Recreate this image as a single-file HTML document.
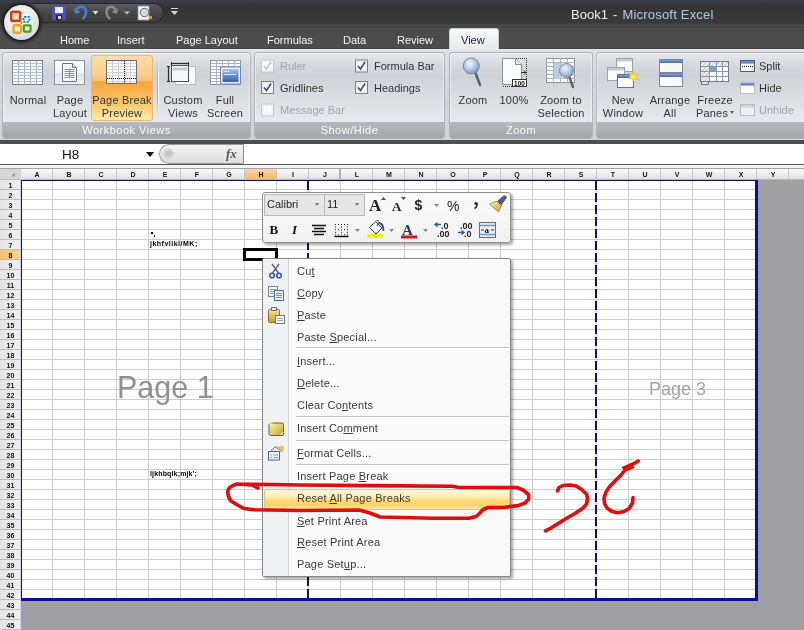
<!DOCTYPE html><html><head><meta charset="utf-8"><title>Book1 - Microsoft Excel</title><style>
*{box-sizing:border-box}
html,body{margin:0;padding:0}
body{width:804px;height:630px;overflow:hidden;position:relative;background:#fff;font-family:"Liberation Sans",sans-serif;}
.abs{position:absolute}
.t{position:absolute;white-space:nowrap;line-height:1;will-change:transform}
</style></head><body>
<div class="abs" style="left:0;top:0;width:804px;height:50px;background:linear-gradient(#3b3e52 0px,#363841 4px,#333333 6px,#3a3a3a 23px,#4a4a4a 25px,#444444 27px,#4b4b4b 29px,#4d4d4d 48px,#383838 49px,#383838 50px)"></div>
<div class="t" style="left:571px;top:8px;font-size:13px;word-spacing:1.5px;color:#ececec">Book1 - <span style="color:#b5c7e0;letter-spacing:0.2px;word-spacing:0">Microsoft Excel</span></div>
<div class="abs" style="left:30px;top:3px;width:134px;height:20px;border-radius:0 10px 10px 0;background:linear-gradient(#5a5a5a,#464646 50%,#3c3c3c);border:1px solid #2a2a2a;border-left:none"></div>
<div class="abs" style="left:-1px;top:0px;width:45px;height:45px;border-radius:50%;background:radial-gradient(circle closest-side,#272727 78%,rgba(45,45,45,0) 100%)"></div>
<div class="abs" style="left:4px;top:4.5px;width:35px;height:35px;border-radius:50%;background:radial-gradient(circle at 45% 40%,#ffffff 0%,#eef0ee 40%,#d5d8d6 75%,#b0b3b1 100%);box-shadow:0 0 1px 1px rgba(0,0,0,.5)"></div>
<svg class="abs" style="left:0;top:0" width="45" height="45">
<rect x="11.2" y="11.9" width="9" height="9" rx="1.5" fill="#f3e0c8" stroke="#d2401a" stroke-width="2.6"/>
<rect x="13.5" y="25.2" width="7.5" height="7.5" rx="1.2" fill="#f6eecc" stroke="#eca51e" stroke-width="2.4"/>
<rect x="23.5" y="16.8" width="6" height="5" rx="1" fill="#e4ecf6" stroke="#2f74c0" stroke-width="1.8" stroke-dasharray="2,1.2"/>
<rect x="23.8" y="25.3" width="6.8" height="6.4" rx="1" fill="#dcefd2" stroke="#4c9a2a" stroke-width="2.2"/>
<circle cx="21.5" cy="23" r="1" fill="#b06a20"/>
</svg>
<svg class="abs" style="left:0;top:0" width="200" height="26">
<rect x="52" y="6" width="14" height="14" rx="1" fill="#4d4fb8"/>
<rect x="55" y="7" width="8" height="6" fill="#e8ecf4"/>
<rect x="56" y="15" width="6" height="5" fill="#23235a"/><rect x="58" y="16" width="3" height="3" fill="#d8dcf0"/>
<path d="M76 11 C78 5, 87 5, 86 13 C85.5 16, 84 18, 82.5 19" fill="none" stroke="#4a7ed6" stroke-width="2.6"/>
<path d="M74 8 L75 14 L80.5 12 Z" fill="#4a7ed6"/>
<path d="M92.5 11 L98.5 11 L95.5 14.5 Z" fill="#e6e6e6"/>
<path d="M116 11 C114 5, 106 5, 106.5 13 C107 16, 108.5 18, 110 19" fill="none" stroke="#8a8a8a" stroke-width="2.6"/>
<path d="M118 8 L117 14 L111.5 12 Z" fill="#8a8a8a"/>
<path d="M124 11.5 L130 11.5 L127 14.5 Z" fill="#bdbdbd"/>
<rect x="138" y="6" width="11" height="14" fill="#f4f4f4" stroke="#9a9a9a" stroke-width=".8"/>
<circle cx="144.5" cy="12.5" r="4.2" fill="#cdd9e6" stroke="#6a6a6a" stroke-width="1"/>
<rect x="149" y="16" width="3" height="3" fill="#e8962e"/>
<path d="M171 8.5 H178" stroke="#d8d8d8" stroke-width="1"/>
<path d="M171 11 L178 11 L174.5 15 Z" fill="#d8d8d8"/>
</svg>
<div class="t" style="left:60px;top:35px;font-size:11px;color:#f4f4f4">Home</div>
<div class="t" style="left:117px;top:35px;font-size:11px;color:#f4f4f4">Insert</div>
<div class="t" style="left:176px;top:35px;font-size:11px;color:#f4f4f4">Page Layout</div>
<div class="t" style="left:266.5px;top:35px;font-size:11px;color:#f4f4f4">Formulas</div>
<div class="t" style="left:343px;top:35px;font-size:11px;color:#f4f4f4">Data</div>
<div class="t" style="left:396.5px;top:35px;font-size:11px;color:#f4f4f4">Review</div>
<div class="abs" style="left:449px;top:28px;width:50px;height:24px;border-radius:3px 3px 0 0;background:linear-gradient(#f7f8f9,#e6e8eb);border:1px solid #c9cbce;border-bottom:none"></div>
<div class="t" style="left:461px;top:35px;font-size:11px;color:#1e1e2e">View</div>
<div class="abs" style="left:0;top:49px;width:804px;height:92px;background:linear-gradient(#dfe1e4,#d3d6da 40%,#cfd2d6);border-top:1px solid #e8eaec"></div>
<div class="abs" style="left:2px;top:52px;width:249px;height:87px;border:1px solid #b0b3b8;border-radius:3px;background:linear-gradient(#e6e8eb 0px,#d3d6db 14px,#ced2d7 24px,#d8dbdf 40px,#e3e5e8 60px,#e8eaec 70px);box-shadow:inset 0 0 0 1px rgba(255,255,255,.45)"></div>
<div class="abs" style="left:3px;top:122px;width:247px;height:16px;background:linear-gradient(#b6b9bd,#a2a6ab);border-radius:0 0 2px 2px"></div>
<div class="t" style="left:2px;width:249px;text-align:center;top:125px;font-size:11px;letter-spacing:0.5px;color:#fbfbfb">Workbook Views</div>
<div class="abs" style="left:254px;top:52px;width:191px;height:87px;border:1px solid #b0b3b8;border-radius:3px;background:linear-gradient(#e6e8eb 0px,#d3d6db 14px,#ced2d7 24px,#d8dbdf 40px,#e3e5e8 60px,#e8eaec 70px);box-shadow:inset 0 0 0 1px rgba(255,255,255,.45)"></div>
<div class="abs" style="left:255px;top:122px;width:189px;height:16px;background:linear-gradient(#b6b9bd,#a2a6ab);border-radius:0 0 2px 2px"></div>
<div class="t" style="left:254px;width:191px;text-align:center;top:125px;font-size:11px;letter-spacing:0.5px;color:#fbfbfb">Show/Hide</div>
<div class="abs" style="left:449px;top:52px;width:144px;height:87px;border:1px solid #b0b3b8;border-radius:3px;background:linear-gradient(#e6e8eb 0px,#d3d6db 14px,#ced2d7 24px,#d8dbdf 40px,#e3e5e8 60px,#e8eaec 70px);box-shadow:inset 0 0 0 1px rgba(255,255,255,.45)"></div>
<div class="abs" style="left:450px;top:122px;width:142px;height:16px;background:linear-gradient(#b6b9bd,#a2a6ab);border-radius:0 0 2px 2px"></div>
<div class="t" style="left:449px;width:144px;text-align:center;top:125px;font-size:11px;letter-spacing:0.5px;color:#fbfbfb">Zoom</div>
<div class="abs" style="left:596px;top:52px;width:220px;height:87px;border:1px solid #b0b3b8;border-radius:3px;background:linear-gradient(#e6e8eb 0px,#d3d6db 14px,#ced2d7 24px,#d8dbdf 40px,#e3e5e8 60px,#e8eaec 70px);box-shadow:inset 0 0 0 1px rgba(255,255,255,.45)"></div>
<div class="abs" style="left:597px;top:122px;width:218px;height:16px;background:linear-gradient(#b6b9bd,#a2a6ab);border-radius:0 0 2px 2px"></div>
<div class="abs" style="left:91px;top:55px;width:62px;height:66px;border:1px solid #e8b878;border-radius:3px;background:linear-gradient(#fcdcaa 0%,#fbcf90 25%,#fac27a 38%,#f8a63e 40%,#f9b24e 55%,#fbca6c 75%,#fde199 92%,#fde9aa 100%)"></div>
<div class="abs" style="left:157px;top:59px;width:1px;height:57px;background:linear-gradient(rgba(160,165,170,0),#a8acb0 30%,#a8acb0 70%,rgba(160,165,170,0))"></div>
<div class="abs" style="left:158px;top:59px;width:1px;height:57px;background:linear-gradient(rgba(255,255,255,0),#fafafa 30%,#fafafa 70%,rgba(255,255,255,0))"></div>
<svg class="abs" style="left:0;top:0" width="804" height="140">
<defs><linearGradient id="blu" x1="0" y1="0" x2="0" y2="1"><stop offset="0" stop-color="#a9c4ea"/><stop offset="1" stop-color="#2f5db0"/></linearGradient><linearGradient id="bar" x1="0" y1="0" x2="0" y2="1"><stop offset="0" stop-color="#7fa2d8"/><stop offset="1" stop-color="#3d68b5"/></linearGradient><radialGradient id="lens" cx="0.4" cy="0.35" r="0.7"><stop offset="0" stop-color="#f2f7ff"/><stop offset="0.6" stop-color="#a9c2e2"/><stop offset="1" stop-color="#6f8fb8"/></radialGradient><linearGradient id="pl" x1="0" y1="0" x2="0" y2="1"><stop offset="0" stop-color="#ffffff"/><stop offset="0.5" stop-color="#f3f5f8"/><stop offset="0.5" stop-color="#dde3ea"/><stop offset="1" stop-color="#eef1f5"/></linearGradient></defs>
<rect x="12.5" y="60.5" width="30" height="24" fill="#ffffff" stroke="#6f7f9a" stroke-width="1"/>
<line x1="18.5" y1="60.5" x2="18.5" y2="84.5" stroke="#a3b1c8" stroke-width="1"/>
<line x1="24.5" y1="60.5" x2="24.5" y2="84.5" stroke="#a3b1c8" stroke-width="1"/>
<line x1="30.5" y1="60.5" x2="30.5" y2="84.5" stroke="#a3b1c8" stroke-width="1"/>
<line x1="36.5" y1="60.5" x2="36.5" y2="84.5" stroke="#a3b1c8" stroke-width="1"/>
<line x1="12.5" y1="63.5" x2="42.5" y2="63.5" stroke="#b3bfd2" stroke-width="1"/>
<line x1="12.5" y1="66.5" x2="42.5" y2="66.5" stroke="#b3bfd2" stroke-width="1"/>
<line x1="12.5" y1="69.5" x2="42.5" y2="69.5" stroke="#b3bfd2" stroke-width="1"/>
<line x1="12.5" y1="72.5" x2="42.5" y2="72.5" stroke="#b3bfd2" stroke-width="1"/>
<line x1="12.5" y1="75.5" x2="42.5" y2="75.5" stroke="#b3bfd2" stroke-width="1"/>
<line x1="12.5" y1="78.5" x2="42.5" y2="78.5" stroke="#b3bfd2" stroke-width="1"/>
<line x1="12.5" y1="81.5" x2="42.5" y2="81.5" stroke="#b3bfd2" stroke-width="1"/>
<rect x="54.5" y="60.5" width="30" height="24" fill="url(#pl)" stroke="#8795ab"/>
<path d="M62.5 63.5 H72.5 L76.5 67.5 V81.5 H62.5 Z" fill="#fafbfc" stroke="#6d7480"/>
<path d="M72.5 63.5 V67.5 H76.5" fill="#e8ebef" stroke="#6d7480"/>
<line x1="64.5" y1="69.5" x2="74.5" y2="69.5" stroke="#8a93a3" stroke-width="1"/>
<line x1="64.5" y1="71.5" x2="74.5" y2="71.5" stroke="#8a93a3" stroke-width="1"/>
<line x1="64.5" y1="73.5" x2="74.5" y2="73.5" stroke="#8a93a3" stroke-width="1"/>
<line x1="64.5" y1="75.5" x2="74.5" y2="75.5" stroke="#8a93a3" stroke-width="1"/>
<line x1="64.5" y1="77.5" x2="74.5" y2="77.5" stroke="#8a93a3" stroke-width="1"/>
<line x1="69.5" y1="69" x2="69.5" y2="78" stroke="#8a93a3"/>
<rect x="106.5" y="60.5" width="30" height="23" fill="#ffffff" stroke="#6c6c6c"/>
<line x1="112.5" y1="61" x2="112.5" y2="83" stroke="#c9cdd4"/>
<line x1="118.5" y1="61" x2="118.5" y2="83" stroke="#c9cdd4"/>
<line x1="124.5" y1="61" x2="124.5" y2="83" stroke="#c9cdd4"/>
<line x1="130.5" y1="61" x2="130.5" y2="83" stroke="#c9cdd4"/>
<line x1="107" y1="63.5" x2="136" y2="63.5" stroke="#d2d6dc"/>
<line x1="107" y1="66.5" x2="136" y2="66.5" stroke="#d2d6dc"/>
<line x1="107" y1="69.5" x2="136" y2="69.5" stroke="#d2d6dc"/>
<line x1="107" y1="72.5" x2="136" y2="72.5" stroke="#d2d6dc"/>
<line x1="107" y1="75.5" x2="136" y2="75.5" stroke="#d2d6dc"/>
<line x1="107" y1="78.5" x2="136" y2="78.5" stroke="#d2d6dc"/>
<line x1="107" y1="81.5" x2="136" y2="81.5" stroke="#d2d6dc"/>
<line x1="124.7" y1="61" x2="124.7" y2="83.5" stroke="#111" stroke-width="1" stroke-dasharray="1,1"/>
<line x1="107" y1="78.5" x2="136" y2="78.5" stroke="#111" stroke-width="1" stroke-dasharray="1,1"/>
<rect x="175.5" y="66.5" width="20" height="18" fill="#fbfcfd" stroke="#b9bec6"/>
<rect x="171.5" y="65.5" width="17" height="16" fill="#f4f6f9" stroke="#4a4f58"/>
<rect x="173" y="67.5" width="14" height="3" fill="#c3c9d3"/>
<line x1="168.5" y1="66" x2="168.5" y2="81.5" stroke="#2a2a2a" stroke-width="1.2"/>
<line x1="167" y1="66.5" x2="170" y2="66.5" stroke="#2a2a2a"/><line x1="167" y1="81.5" x2="170" y2="81.5" stroke="#2a2a2a"/>
<line x1="171" y1="63.5" x2="189" y2="63.5" stroke="#2a2a2a" stroke-width="1.2"/>
<line x1="171.5" y1="62" x2="171.5" y2="65" stroke="#2a2a2a"/><line x1="188.5" y1="62" x2="188.5" y2="65" stroke="#2a2a2a"/>
<rect x="210.5" y="60.5" width="30" height="24" fill="#ffffff" stroke="#8a94a4"/>
<line x1="216.5" y1="60.5" x2="216.5" y2="84.5" stroke="#aab3c0"/>
<line x1="222.5" y1="60.5" x2="222.5" y2="84.5" stroke="#aab3c0"/>
<line x1="228.5" y1="60.5" x2="228.5" y2="84.5" stroke="#aab3c0"/>
<line x1="234.5" y1="60.5" x2="234.5" y2="84.5" stroke="#aab3c0"/>
<line x1="210.5" y1="63.5" x2="240.5" y2="63.5" stroke="#aab3c0"/>
<line x1="210.5" y1="66.5" x2="240.5" y2="66.5" stroke="#aab3c0"/>
<line x1="210.5" y1="69.5" x2="240.5" y2="69.5" stroke="#aab3c0"/>
<line x1="210.5" y1="72.5" x2="240.5" y2="72.5" stroke="#aab3c0"/>
<line x1="210.5" y1="75.5" x2="240.5" y2="75.5" stroke="#aab3c0"/>
<line x1="210.5" y1="78.5" x2="240.5" y2="78.5" stroke="#aab3c0"/>
<line x1="210.5" y1="81.5" x2="240.5" y2="81.5" stroke="#aab3c0"/>
<rect x="220.5" y="67" width="20" height="17" fill="#eef3fa" stroke="#6f87aa"/>
<rect x="222.5" y="69" width="16" height="13" fill="url(#blu)"/>
<line x1="224" y1="71.5" x2="230" y2="71.5" stroke="#d6e2f3"/><line x1="224" y1="74.5" x2="236" y2="74.5" stroke="#d6e2f3"/>
<rect x="261.5" y="60.0" width="12" height="12" fill="#f7f8f9" stroke="#c4c7cb"/>
<rect x="263" y="61.5" width="9" height="9" fill="none" stroke="#eceef0"/>
<path d="M264 66.0 L266.5 69.0 L271 62.0" fill="none" stroke="#c0c4ca" stroke-width="1.5"/>
<rect x="261.5" y="81.5" width="12" height="12" fill="#f7f8f9" stroke="#7d8289"/>
<rect x="263" y="83" width="9" height="9" fill="none" stroke="#dfe3e8"/>
<path d="M264 87.5 L266.5 90.5 L271 83.5" fill="none" stroke="#34475f" stroke-width="1.5"/>
<rect x="261.5" y="104.0" width="12" height="12" fill="#f7f8f9" stroke="#c4c7cb"/>
<rect x="263" y="105.5" width="9" height="9" fill="none" stroke="#eceef0"/>
<rect x="355.5" y="60.0" width="12" height="12" fill="#f7f8f9" stroke="#7d8289"/>
<rect x="357" y="61.5" width="9" height="9" fill="none" stroke="#dfe3e8"/>
<path d="M358 66.0 L360.5 69.0 L365 62.0" fill="none" stroke="#34475f" stroke-width="1.5"/>
<rect x="355.5" y="81.5" width="12" height="12" fill="#f7f8f9" stroke="#7d8289"/>
<rect x="357" y="83" width="9" height="9" fill="none" stroke="#dfe3e8"/>
<path d="M358 87.5 L360.5 90.5 L365 83.5" fill="none" stroke="#34475f" stroke-width="1.5"/>
<line x1="475.5" y1="73" x2="480" y2="85" stroke="#575b62" stroke-width="2.4" stroke-linecap="round"/>
<circle cx="471.3" cy="66" r="8" fill="url(#lens)" stroke="#7b8896" stroke-width="1"/>
<rect x="516" y="58" width="1" height="1" fill="#333"/><rect x="518" y="58" width="1" height="1" fill="#333"/><rect x="520" y="58" width="1" height="1" fill="#333"/><rect x="522" y="58" width="1" height="1" fill="#333"/><rect x="524" y="58" width="1" height="1" fill="#333"/><rect x="526" y="58" width="1" height="1" fill="#333"/><rect x="526" y="58" width="1" height="1" fill="#333"/><rect x="526" y="60" width="1" height="1" fill="#333"/><rect x="526" y="62" width="1" height="1" fill="#333"/><rect x="526" y="64" width="1" height="1" fill="#333"/><rect x="526" y="66" width="1" height="1" fill="#333"/><rect x="526" y="68" width="1" height="1" fill="#333"/><rect x="526" y="70" width="1" height="1" fill="#333"/><rect x="526" y="72" width="1" height="1" fill="#333"/><rect x="526" y="74" width="1" height="1" fill="#333"/><rect x="526" y="76" width="1" height="1" fill="#333"/><rect x="526" y="78" width="1" height="1" fill="#333"/><rect x="526" y="80" width="1" height="1" fill="#333"/><rect x="526" y="82" width="1" height="1" fill="#333"/><rect x="526" y="84" width="1" height="1" fill="#333"/><rect x="503" y="86" width="1" height="1" fill="#333"/><rect x="505" y="86" width="1" height="1" fill="#333"/><rect x="507" y="86" width="1" height="1" fill="#333"/><rect x="509" y="86" width="1" height="1" fill="#333"/><rect x="511" y="86" width="1" height="1" fill="#333"/><rect x="513" y="86" width="1" height="1" fill="#333"/><rect x="515" y="86" width="1" height="1" fill="#333"/><rect x="517" y="86" width="1" height="1" fill="#333"/><rect x="519" y="86" width="1" height="1" fill="#333"/><rect x="521" y="86" width="1" height="1" fill="#333"/><rect x="523" y="86" width="1" height="1" fill="#333"/><rect x="525" y="86" width="1" height="1" fill="#333"/>
<path d="M502.5 58.5 H515.5 L521.5 64.5 V84.5 H502.5 Z" fill="#fbfcfd" stroke="#8a9099"/>
<path d="M515.5 58.5 V64.5 H521.5" fill="#e5e8ec" stroke="#8a9099"/>
<path d="M521 72.5 H526 M524 70.5 L526 72.5 L524 74.5" fill="none" stroke="#333"/>
<rect x="512.5" y="79.5" width="14" height="7" fill="#fff" stroke="#333"/>
<text x="519.5" y="85.6" font-family="Liberation Sans" font-size="6.5" font-weight="bold" text-anchor="middle" fill="#111">100</text>
<rect x="546.5" y="58.5" width="28" height="24" fill="#fff" stroke="#8d97a6"/>
<line x1="553.5" y1="58.5" x2="553.5" y2="82.5" stroke="#a9b3c2"/>
<line x1="560.5" y1="58.5" x2="560.5" y2="82.5" stroke="#a9b3c2"/>
<line x1="567.5" y1="58.5" x2="567.5" y2="82.5" stroke="#a9b3c2"/>
<line x1="546.5" y1="62.5" x2="574.5" y2="62.5" stroke="#a9b3c2"/>
<line x1="546.5" y1="66.5" x2="574.5" y2="66.5" stroke="#a9b3c2"/>
<line x1="546.5" y1="70.5" x2="574.5" y2="70.5" stroke="#a9b3c2"/>
<line x1="546.5" y1="74.5" x2="574.5" y2="74.5" stroke="#a9b3c2"/>
<line x1="546.5" y1="78.5" x2="574.5" y2="78.5" stroke="#a9b3c2"/>
<rect x="554" y="63" width="8" height="16" fill="#b9cbe6"/>
<line x1="569" y1="76" x2="573" y2="87" stroke="#5b5f66" stroke-width="2.4" stroke-linecap="round"/>
<circle cx="566.5" cy="70.5" r="7" fill="url(#lens)" stroke="#7b8896"/>
<rect x="616.5" y="58.5" width="16" height="13" fill="#fdfdfd" stroke="#9ba3ad"/><rect x="617" y="59" width="15" height="2.5" fill="#c8ccd2"/>
<rect x="607.5" y="67.5" width="17" height="13" fill="#fdfdfd" stroke="#9ba3ad"/><rect x="608" y="68" width="16" height="2.5" fill="#c8ccd2"/>
<rect x="617.5" y="74.5" width="16" height="13" fill="#fdfdfd" stroke="#6a7484"/><rect x="618" y="75" width="15" height="3" fill="url(#bar)"/>
<path d="M633 71 L634.5 75 L638.5 73.5 L636 76.5 L638.5 80 L634.5 78.5 L633 81.5 L632 78 L628.5 79 L630.5 76 L628.5 73 L632 74.5 Z" fill="#ffe566" stroke="#e6b800" stroke-width=".6"/>
<rect x="659.5" y="59.5" width="23" height="13" fill="#f8f9fb" stroke="#7d8796"/><rect x="660" y="60" width="22" height="3" fill="url(#bar)"/>
<rect x="659.5" y="73.5" width="23" height="13" fill="#f8f9fb" stroke="#7d8796"/><rect x="660" y="74" width="22" height="3" fill="url(#bar)"/>
<defs><pattern id="hatch" width="3" height="3" patternUnits="userSpaceOnUse" patternTransform="rotate(45)"><rect width="3" height="3" fill="#eef1f6"/><line x1="0" y1="0" x2="0" y2="3" stroke="#8a9ab8" stroke-width="1"/></pattern></defs>
<rect x="700.5" y="61.5" width="28" height="20" fill="#fff" stroke="#6f7b8c"/>
<rect x="701" y="62" width="8" height="19" fill="url(#hatch)"/><rect x="709" y="62" width="19" height="4.5" fill="url(#hatch)"/>
<line x1="709.5" y1="61.5" x2="709.5" y2="81.5" stroke="#8d97a6"/>
<line x1="716.5" y1="61.5" x2="716.5" y2="81.5" stroke="#8d97a6"/>
<line x1="722.5" y1="61.5" x2="722.5" y2="81.5" stroke="#8d97a6"/>
<line x1="700.5" y1="66.5" x2="728.5" y2="66.5" stroke="#8d97a6"/>
<line x1="700.5" y1="71.5" x2="728.5" y2="71.5" stroke="#8d97a6"/>
<line x1="700.5" y1="76.5" x2="728.5" y2="76.5" stroke="#8d97a6"/>
<rect x="710" y="67" width="6" height="4" fill="#7a9fd6"/>
<rect x="701.5" y="81.5" width="7" height="3" fill="url(#hatch)" stroke="#6f7b8c"/>
<rect x="740.5" y="60.5" width="14" height="11" fill="#fff" stroke="#55606e"/><rect x="741" y="61" width="13" height="2.5" fill="url(#bar)"/><line x1="742" y1="66.5" x2="753" y2="66.5" stroke="#333" stroke-dasharray="1,1"/>
<rect x="740.5" y="82.5" width="14" height="11" fill="#fff" stroke="#8a93a0" stroke-dasharray="1,1"/><rect x="741" y="83" width="13" height="2.5" fill="url(#bar)"/>
<rect x="740.5" y="104.5" width="14" height="11" fill="#eef0f2" stroke="#b7bcc3"/><rect x="741" y="105" width="13" height="2.5" fill="#cdd1d6"/>
</svg>
<div class="t" style="left:-12.5px;width:80px;text-align:center;top:94.5px;font-size:11px;letter-spacing:0.2px;color:#333333">Normal</div>
<div class="t" style="left:29.5px;width:80px;text-align:center;top:94.5px;font-size:11px;letter-spacing:0.2px;color:#333333">Page</div>
<div class="t" style="left:29.5px;width:80px;text-align:center;top:107.5px;font-size:11px;letter-spacing:0.2px;color:#333333">Layout</div>
<div class="t" style="left:81.5px;width:80px;text-align:center;top:94.5px;font-size:11px;letter-spacing:0.2px;color:#333333">Page Break</div>
<div class="t" style="left:81.5px;width:80px;text-align:center;top:107.5px;font-size:11px;letter-spacing:0.2px;color:#333333">Preview</div>
<div class="t" style="left:142.5px;width:80px;text-align:center;top:94.5px;font-size:11px;letter-spacing:0.2px;color:#333333">Custom</div>
<div class="t" style="left:142.5px;width:80px;text-align:center;top:107.5px;font-size:11px;letter-spacing:0.2px;color:#333333">Views</div>
<div class="t" style="left:185px;width:80px;text-align:center;top:94.5px;font-size:11px;letter-spacing:0.2px;color:#333333">Full</div>
<div class="t" style="left:185px;width:80px;text-align:center;top:107.5px;font-size:11px;letter-spacing:0.2px;color:#333333">Screen</div>
<div class="t" style="left:280px;top:61px;font-size:11px;color:#a2a5a9">Ruler</div>
<div class="t" style="left:280px;top:83px;font-size:11px;color:#333333">Gridlines</div>
<div class="t" style="left:280px;top:105px;font-size:11px;color:#a2a5a9">Message Bar</div>
<div class="t" style="left:374px;top:61px;font-size:11px;color:#333333">Formula Bar</div>
<div class="t" style="left:374px;top:83px;font-size:11px;color:#333333">Headings</div>
<div class="t" style="left:432.5px;width:80px;text-align:center;top:94.5px;font-size:11px;letter-spacing:0.2px;color:#333333">Zoom</div>
<div class="t" style="left:474px;width:80px;text-align:center;top:94.5px;font-size:11px;letter-spacing:0.2px;color:#333333">100%</div>
<div class="t" style="left:521px;width:80px;text-align:center;top:94.5px;font-size:11px;letter-spacing:0.2px;color:#333333">Zoom to</div>
<div class="t" style="left:521px;width:80px;text-align:center;top:107.5px;font-size:11px;letter-spacing:0.2px;color:#333333">Selection</div>
<div class="t" style="left:583px;width:80px;text-align:center;top:94.5px;font-size:11px;letter-spacing:0.2px;color:#333333">New</div>
<div class="t" style="left:583px;width:80px;text-align:center;top:107.5px;font-size:11px;letter-spacing:0.2px;color:#333333">Window</div>
<div class="t" style="left:630px;width:80px;text-align:center;top:94.5px;font-size:11px;letter-spacing:0.2px;color:#333333">Arrange</div>
<div class="t" style="left:630px;width:80px;text-align:center;top:107.5px;font-size:11px;letter-spacing:0.2px;color:#333333">All</div>
<div class="t" style="left:674.5px;width:80px;text-align:center;top:94.5px;font-size:11px;letter-spacing:0.2px;color:#333333">Freeze</div>
<div class="t" style="left:672px;width:80px;text-align:center;top:107.5px;font-size:11px;letter-spacing:0.2px;color:#333333">Panes</div>
<div class="abs" style="left:730px;top:111px;width:0;height:0;border-left:2.5px solid transparent;border-right:2.5px solid transparent;border-top:3px solid #555"></div>
<div class="t" style="left:759px;top:61px;font-size:11px;color:#333333">Split</div>
<div class="t" style="left:759px;top:83px;font-size:11px;color:#333333">Hide</div>
<div class="t" style="left:759px;top:105px;font-size:11px;color:#a2a5a9">Unhide</div>
<div class="abs" style="left:0;top:140px;width:804px;height:4px;background:#4e4e4e"></div>
<div class="abs" style="left:0;top:144px;width:804px;height:20px;background:#fff"></div>
<div class="abs" style="left:0;top:164px;width:804px;height:1px;background:#585858"></div>
<div class="abs" style="left:0;top:165px;width:804px;height:3px;background:#f4f4f4"></div>
<div class="abs" style="left:0;top:168px;width:804px;height:1px;background:#a5a5a5"></div>
<div class="t" style="left:61.5px;top:148px;font-size:13.5px;color:#111">H8</div>
<div class="abs" style="left:145.5px;top:152px;width:0;height:0;border-left:4.5px solid transparent;border-right:4.5px solid transparent;border-top:5px solid #000"></div>
<div class="abs" style="left:159px;top:144px;width:85px;height:20px;border-radius:10px 0 0 10px;background:linear-gradient(#f3f3f3,#dcdcdc);border:1px solid #9c9c9c;border-right:1px solid #8a8a8a"></div>
<div class="abs" style="left:162px;top:148px;width:12px;height:12px;border-radius:50%;background:radial-gradient(circle at 55% 45%,#b8b8b8 0%,#d8d8d8 50%,rgba(230,230,230,0) 75%)"></div>
<div class="t" style="left:226px;top:147px;font-size:13px;font-style:italic;font-family:'Liberation Serif',serif;color:#555;font-weight:bold">fx</div>
<svg class="abs" style="left:0;top:0" width="804" height="630" shape-rendering="crispEdges">
<defs><linearGradient id="hdr" x1="0" y1="0" x2="0" y2="1"><stop offset="0" stop-color="#f9f9f9"/><stop offset="0.5" stop-color="#eeeeee"/><stop offset="1" stop-color="#e0e0e0"/></linearGradient><linearGradient id="rhdr" x1="0" y1="0" x2="1" y2="0"><stop offset="0" stop-color="#e4e4e4"/><stop offset="1" stop-color="#f0f0f0"/></linearGradient><linearGradient id="ohdr" x1="0" y1="0" x2="0" y2="1"><stop offset="0" stop-color="#fbd9a4"/><stop offset="0.5" stop-color="#f9c784"/><stop offset="1" stop-color="#f6b868"/></linearGradient><linearGradient id="orow" x1="0" y1="0" x2="1" y2="0"><stop offset="0" stop-color="#f8c07a"/><stop offset="1" stop-color="#fbd197"/></linearGradient></defs>
<rect x="0" y="169" width="804" height="10" fill="url(#hdr)"/>
<rect x="0" y="169" width="20" height="11" fill="#d6d6d6"/><path d="M15 172.5 L15 176.5 L11 176.5 Z" fill="#9a9a9a" shape-rendering="auto"/>
<rect x="245" y="169" width="31" height="10" fill="url(#ohdr)"/>
<rect x="0" y="179" width="804" height="1" fill="#b8b8b8"/>
<rect x="0" y="180" width="20" height="450" fill="url(#rhdr)"/>
<rect x="0" y="250" width="20" height="9" fill="url(#orow)"/>
<rect x="20" y="169" width="1" height="461" fill="#cfcfe6"/>
<rect x="758" y="180" width="46" height="450" fill="#a09fa4"/>
<rect x="21" y="601" width="783" height="29" fill="#a09fa4"/>
<rect x="52" y="169" width="1" height="10" fill="#c4c4c4"/>
<rect x="84" y="169" width="1" height="10" fill="#c4c4c4"/>
<rect x="116" y="169" width="1" height="10" fill="#c4c4c4"/>
<rect x="148" y="169" width="1" height="10" fill="#c4c4c4"/>
<rect x="180" y="169" width="1" height="10" fill="#c4c4c4"/>
<rect x="212" y="169" width="1" height="10" fill="#c4c4c4"/>
<rect x="244" y="169" width="1" height="10" fill="#c4c4c4"/>
<rect x="276" y="169" width="1" height="10" fill="#c4c4c4"/>
<rect x="308" y="169" width="1" height="10" fill="#c4c4c4"/>
<rect x="340" y="169" width="1" height="10" fill="#c4c4c4"/>
<rect x="372" y="169" width="1" height="10" fill="#c4c4c4"/>
<rect x="404" y="169" width="1" height="10" fill="#c4c4c4"/>
<rect x="436" y="169" width="1" height="10" fill="#c4c4c4"/>
<rect x="468" y="169" width="1" height="10" fill="#c4c4c4"/>
<rect x="500" y="169" width="1" height="10" fill="#c4c4c4"/>
<rect x="532" y="169" width="1" height="10" fill="#c4c4c4"/>
<rect x="564" y="169" width="1" height="10" fill="#c4c4c4"/>
<rect x="596" y="169" width="1" height="10" fill="#c4c4c4"/>
<rect x="628" y="169" width="1" height="10" fill="#c4c4c4"/>
<rect x="660" y="169" width="1" height="10" fill="#c4c4c4"/>
<rect x="692" y="169" width="1" height="10" fill="#c4c4c4"/>
<rect x="724" y="169" width="1" height="10" fill="#c4c4c4"/>
<rect x="756" y="169" width="1" height="10" fill="#c4c4c4"/>
<rect x="788" y="169" width="1" height="10" fill="#c4c4c4"/>
<rect x="820" y="169" width="1" height="10" fill="#c4c4c4"/>
<rect x="339" y="169" width="2" height="10" fill="#b0b0b0"/>
<rect x="0" y="189" width="20" height="1" fill="#bdbdbd"/>
<rect x="0" y="199" width="20" height="1" fill="#bdbdbd"/>
<rect x="0" y="209" width="20" height="1" fill="#bdbdbd"/>
<rect x="0" y="219" width="20" height="1" fill="#bdbdbd"/>
<rect x="0" y="229" width="20" height="1" fill="#bdbdbd"/>
<rect x="0" y="239" width="20" height="1" fill="#bdbdbd"/>
<rect x="0" y="249" width="20" height="1" fill="#bdbdbd"/>
<rect x="0" y="259" width="20" height="1" fill="#bdbdbd"/>
<rect x="0" y="269" width="20" height="1" fill="#bdbdbd"/>
<rect x="0" y="279" width="20" height="1" fill="#bdbdbd"/>
<rect x="0" y="289" width="20" height="1" fill="#bdbdbd"/>
<rect x="0" y="299" width="20" height="1" fill="#bdbdbd"/>
<rect x="0" y="309" width="20" height="1" fill="#bdbdbd"/>
<rect x="0" y="319" width="20" height="1" fill="#bdbdbd"/>
<rect x="0" y="329" width="20" height="1" fill="#bdbdbd"/>
<rect x="0" y="339" width="20" height="1" fill="#bdbdbd"/>
<rect x="0" y="349" width="20" height="1" fill="#bdbdbd"/>
<rect x="0" y="359" width="20" height="1" fill="#bdbdbd"/>
<rect x="0" y="369" width="20" height="1" fill="#bdbdbd"/>
<rect x="0" y="379" width="20" height="1" fill="#bdbdbd"/>
<rect x="0" y="389" width="20" height="1" fill="#bdbdbd"/>
<rect x="0" y="399" width="20" height="1" fill="#bdbdbd"/>
<rect x="0" y="409" width="20" height="1" fill="#bdbdbd"/>
<rect x="0" y="419" width="20" height="1" fill="#bdbdbd"/>
<rect x="0" y="429" width="20" height="1" fill="#bdbdbd"/>
<rect x="0" y="439" width="20" height="1" fill="#bdbdbd"/>
<rect x="0" y="449" width="20" height="1" fill="#bdbdbd"/>
<rect x="0" y="459" width="20" height="1" fill="#bdbdbd"/>
<rect x="0" y="469" width="20" height="1" fill="#bdbdbd"/>
<rect x="0" y="479" width="20" height="1" fill="#bdbdbd"/>
<rect x="0" y="489" width="20" height="1" fill="#bdbdbd"/>
<rect x="0" y="499" width="20" height="1" fill="#bdbdbd"/>
<rect x="0" y="509" width="20" height="1" fill="#bdbdbd"/>
<rect x="0" y="519" width="20" height="1" fill="#bdbdbd"/>
<rect x="0" y="529" width="20" height="1" fill="#bdbdbd"/>
<rect x="0" y="539" width="20" height="1" fill="#bdbdbd"/>
<rect x="0" y="549" width="20" height="1" fill="#bdbdbd"/>
<rect x="0" y="559" width="20" height="1" fill="#bdbdbd"/>
<rect x="0" y="569" width="20" height="1" fill="#bdbdbd"/>
<rect x="0" y="579" width="20" height="1" fill="#bdbdbd"/>
<rect x="0" y="589" width="20" height="1" fill="#bdbdbd"/>
<rect x="0" y="599" width="20" height="1" fill="#bdbdbd"/>
<rect x="0" y="609" width="20" height="1" fill="#bdbdbd"/>
<rect x="0" y="619" width="20" height="1" fill="#bdbdbd"/>
<rect x="0" y="629" width="20" height="1" fill="#bdbdbd"/>
<rect x="52" y="181" width="1" height="417" fill="#cdcdcd"/>
<rect x="84" y="181" width="1" height="417" fill="#cdcdcd"/>
<rect x="116" y="181" width="1" height="417" fill="#cdcdcd"/>
<rect x="148" y="181" width="1" height="417" fill="#cdcdcd"/>
<rect x="180" y="181" width="1" height="417" fill="#cdcdcd"/>
<rect x="212" y="181" width="1" height="417" fill="#cdcdcd"/>
<rect x="244" y="181" width="1" height="417" fill="#cdcdcd"/>
<rect x="276" y="181" width="1" height="417" fill="#cdcdcd"/>
<rect x="308" y="181" width="1" height="417" fill="#cdcdcd"/>
<rect x="340" y="181" width="1" height="417" fill="#cdcdcd"/>
<rect x="372" y="181" width="1" height="417" fill="#cdcdcd"/>
<rect x="404" y="181" width="1" height="417" fill="#cdcdcd"/>
<rect x="436" y="181" width="1" height="417" fill="#cdcdcd"/>
<rect x="468" y="181" width="1" height="417" fill="#cdcdcd"/>
<rect x="500" y="181" width="1" height="417" fill="#cdcdcd"/>
<rect x="532" y="181" width="1" height="417" fill="#cdcdcd"/>
<rect x="564" y="181" width="1" height="417" fill="#cdcdcd"/>
<rect x="596" y="181" width="1" height="417" fill="#cdcdcd"/>
<rect x="628" y="181" width="1" height="417" fill="#cdcdcd"/>
<rect x="660" y="181" width="1" height="417" fill="#cdcdcd"/>
<rect x="692" y="181" width="1" height="417" fill="#cdcdcd"/>
<rect x="724" y="181" width="1" height="417" fill="#cdcdcd"/>
<rect x="22" y="189" width="733" height="1" fill="#cdcdcd"/>
<rect x="22" y="199" width="733" height="1" fill="#cdcdcd"/>
<rect x="22" y="209" width="733" height="1" fill="#cdcdcd"/>
<rect x="22" y="219" width="733" height="1" fill="#cdcdcd"/>
<rect x="22" y="229" width="733" height="1" fill="#cdcdcd"/>
<rect x="22" y="239" width="733" height="1" fill="#cdcdcd"/>
<rect x="22" y="249" width="733" height="1" fill="#cdcdcd"/>
<rect x="22" y="259" width="733" height="1" fill="#cdcdcd"/>
<rect x="22" y="269" width="733" height="1" fill="#cdcdcd"/>
<rect x="22" y="279" width="733" height="1" fill="#cdcdcd"/>
<rect x="22" y="289" width="733" height="1" fill="#cdcdcd"/>
<rect x="22" y="299" width="733" height="1" fill="#cdcdcd"/>
<rect x="22" y="309" width="733" height="1" fill="#cdcdcd"/>
<rect x="22" y="319" width="733" height="1" fill="#cdcdcd"/>
<rect x="22" y="329" width="733" height="1" fill="#cdcdcd"/>
<rect x="22" y="339" width="733" height="1" fill="#cdcdcd"/>
<rect x="22" y="349" width="733" height="1" fill="#cdcdcd"/>
<rect x="22" y="359" width="733" height="1" fill="#cdcdcd"/>
<rect x="22" y="369" width="733" height="1" fill="#cdcdcd"/>
<rect x="22" y="379" width="733" height="1" fill="#cdcdcd"/>
<rect x="22" y="389" width="733" height="1" fill="#cdcdcd"/>
<rect x="22" y="399" width="733" height="1" fill="#cdcdcd"/>
<rect x="22" y="409" width="733" height="1" fill="#cdcdcd"/>
<rect x="22" y="419" width="733" height="1" fill="#cdcdcd"/>
<rect x="22" y="429" width="733" height="1" fill="#cdcdcd"/>
<rect x="22" y="439" width="733" height="1" fill="#cdcdcd"/>
<rect x="22" y="449" width="733" height="1" fill="#cdcdcd"/>
<rect x="22" y="459" width="733" height="1" fill="#cdcdcd"/>
<rect x="22" y="469" width="733" height="1" fill="#cdcdcd"/>
<rect x="22" y="479" width="733" height="1" fill="#cdcdcd"/>
<rect x="22" y="489" width="733" height="1" fill="#cdcdcd"/>
<rect x="22" y="499" width="733" height="1" fill="#cdcdcd"/>
<rect x="22" y="509" width="733" height="1" fill="#cdcdcd"/>
<rect x="22" y="519" width="733" height="1" fill="#cdcdcd"/>
<rect x="22" y="529" width="733" height="1" fill="#cdcdcd"/>
<rect x="22" y="539" width="733" height="1" fill="#cdcdcd"/>
<rect x="22" y="549" width="733" height="1" fill="#cdcdcd"/>
<rect x="22" y="559" width="733" height="1" fill="#cdcdcd"/>
<rect x="22" y="569" width="733" height="1" fill="#cdcdcd"/>
<rect x="22" y="579" width="733" height="1" fill="#cdcdcd"/>
<rect x="22" y="589" width="733" height="1" fill="#cdcdcd"/>
<rect x="21" y="180" width="736" height="1" fill="#12125e"/>
<rect x="21" y="180" width="1" height="420" fill="#16165e"/>
<rect x="755" y="180" width="3" height="421" fill="#0d0d9c"/>
<rect x="21" y="598" width="737" height="3" fill="#0d0d9c"/>
<rect x="307" y="181" width="2" height="9" fill="#14144e"/>
<rect x="307" y="193" width="2" height="9" fill="#14144e"/>
<rect x="307" y="205" width="2" height="9" fill="#14144e"/>
<rect x="307" y="217" width="2" height="9" fill="#14144e"/>
<rect x="307" y="229" width="2" height="9" fill="#14144e"/>
<rect x="307" y="241" width="2" height="9" fill="#14144e"/>
<rect x="307" y="253" width="2" height="9" fill="#14144e"/>
<rect x="307" y="265" width="2" height="9" fill="#14144e"/>
<rect x="307" y="277" width="2" height="9" fill="#14144e"/>
<rect x="307" y="289" width="2" height="9" fill="#14144e"/>
<rect x="307" y="301" width="2" height="9" fill="#14144e"/>
<rect x="307" y="313" width="2" height="9" fill="#14144e"/>
<rect x="307" y="325" width="2" height="9" fill="#14144e"/>
<rect x="307" y="337" width="2" height="9" fill="#14144e"/>
<rect x="307" y="349" width="2" height="9" fill="#14144e"/>
<rect x="307" y="361" width="2" height="9" fill="#14144e"/>
<rect x="307" y="373" width="2" height="9" fill="#14144e"/>
<rect x="307" y="385" width="2" height="9" fill="#14144e"/>
<rect x="307" y="397" width="2" height="9" fill="#14144e"/>
<rect x="307" y="409" width="2" height="9" fill="#14144e"/>
<rect x="307" y="421" width="2" height="9" fill="#14144e"/>
<rect x="307" y="433" width="2" height="9" fill="#14144e"/>
<rect x="307" y="445" width="2" height="9" fill="#14144e"/>
<rect x="307" y="457" width="2" height="9" fill="#14144e"/>
<rect x="307" y="469" width="2" height="9" fill="#14144e"/>
<rect x="307" y="481" width="2" height="9" fill="#14144e"/>
<rect x="307" y="493" width="2" height="9" fill="#14144e"/>
<rect x="307" y="505" width="2" height="9" fill="#14144e"/>
<rect x="307" y="517" width="2" height="9" fill="#14144e"/>
<rect x="307" y="529" width="2" height="9" fill="#14144e"/>
<rect x="307" y="541" width="2" height="9" fill="#14144e"/>
<rect x="307" y="553" width="2" height="9" fill="#14144e"/>
<rect x="307" y="565" width="2" height="9" fill="#14144e"/>
<rect x="307" y="577" width="2" height="9" fill="#14144e"/>
<rect x="307" y="589" width="2" height="9" fill="#14144e"/>
<rect x="595" y="181" width="2" height="9" fill="#14144e"/>
<rect x="595" y="193" width="2" height="9" fill="#14144e"/>
<rect x="595" y="205" width="2" height="9" fill="#14144e"/>
<rect x="595" y="217" width="2" height="9" fill="#14144e"/>
<rect x="595" y="229" width="2" height="9" fill="#14144e"/>
<rect x="595" y="241" width="2" height="9" fill="#14144e"/>
<rect x="595" y="253" width="2" height="9" fill="#14144e"/>
<rect x="595" y="265" width="2" height="9" fill="#14144e"/>
<rect x="595" y="277" width="2" height="9" fill="#14144e"/>
<rect x="595" y="289" width="2" height="9" fill="#14144e"/>
<rect x="595" y="301" width="2" height="9" fill="#14144e"/>
<rect x="595" y="313" width="2" height="9" fill="#14144e"/>
<rect x="595" y="325" width="2" height="9" fill="#14144e"/>
<rect x="595" y="337" width="2" height="9" fill="#14144e"/>
<rect x="595" y="349" width="2" height="9" fill="#14144e"/>
<rect x="595" y="361" width="2" height="9" fill="#14144e"/>
<rect x="595" y="373" width="2" height="9" fill="#14144e"/>
<rect x="595" y="385" width="2" height="9" fill="#14144e"/>
<rect x="595" y="397" width="2" height="9" fill="#14144e"/>
<rect x="595" y="409" width="2" height="9" fill="#14144e"/>
<rect x="595" y="421" width="2" height="9" fill="#14144e"/>
<rect x="595" y="433" width="2" height="9" fill="#14144e"/>
<rect x="595" y="445" width="2" height="9" fill="#14144e"/>
<rect x="595" y="457" width="2" height="9" fill="#14144e"/>
<rect x="595" y="469" width="2" height="9" fill="#14144e"/>
<rect x="595" y="481" width="2" height="9" fill="#14144e"/>
<rect x="595" y="493" width="2" height="9" fill="#14144e"/>
<rect x="595" y="505" width="2" height="9" fill="#14144e"/>
<rect x="595" y="517" width="2" height="9" fill="#14144e"/>
<rect x="595" y="529" width="2" height="9" fill="#14144e"/>
<rect x="595" y="541" width="2" height="9" fill="#14144e"/>
<rect x="595" y="553" width="2" height="9" fill="#14144e"/>
<rect x="595" y="565" width="2" height="9" fill="#14144e"/>
<rect x="595" y="577" width="2" height="9" fill="#14144e"/>
<rect x="595" y="589" width="2" height="9" fill="#14144e"/>
<rect x="243" y="248" width="35" height="3" fill="#000"/>
<rect x="243" y="258" width="35" height="3" fill="#000"/>
<rect x="243" y="248" width="3" height="13" fill="#000"/>
<rect x="275" y="248" width="3" height="13" fill="#000"/>
</svg>
<div class="t" style="left:27px;width:20px;text-align:center;top:171px;font-size:7px;font-weight:bold;color:#111">A</div>
<div class="t" style="left:59px;width:20px;text-align:center;top:171px;font-size:7px;font-weight:bold;color:#111">B</div>
<div class="t" style="left:91px;width:20px;text-align:center;top:171px;font-size:7px;font-weight:bold;color:#111">C</div>
<div class="t" style="left:123px;width:20px;text-align:center;top:171px;font-size:7px;font-weight:bold;color:#111">D</div>
<div class="t" style="left:155px;width:20px;text-align:center;top:171px;font-size:7px;font-weight:bold;color:#111">E</div>
<div class="t" style="left:187px;width:20px;text-align:center;top:171px;font-size:7px;font-weight:bold;color:#111">F</div>
<div class="t" style="left:219px;width:20px;text-align:center;top:171px;font-size:7px;font-weight:bold;color:#111">G</div>
<div class="t" style="left:251px;width:20px;text-align:center;top:171px;font-size:7px;font-weight:bold;color:#111">H</div>
<div class="t" style="left:283px;width:20px;text-align:center;top:171px;font-size:7px;font-weight:bold;color:#111">I</div>
<div class="t" style="left:315px;width:20px;text-align:center;top:171px;font-size:7px;font-weight:bold;color:#111">J</div>
<div class="t" style="left:347px;width:20px;text-align:center;top:171px;font-size:7px;font-weight:bold;color:#111">L</div>
<div class="t" style="left:379px;width:20px;text-align:center;top:171px;font-size:7px;font-weight:bold;color:#111">M</div>
<div class="t" style="left:411px;width:20px;text-align:center;top:171px;font-size:7px;font-weight:bold;color:#111">N</div>
<div class="t" style="left:443px;width:20px;text-align:center;top:171px;font-size:7px;font-weight:bold;color:#111">O</div>
<div class="t" style="left:475px;width:20px;text-align:center;top:171px;font-size:7px;font-weight:bold;color:#111">P</div>
<div class="t" style="left:507px;width:20px;text-align:center;top:171px;font-size:7px;font-weight:bold;color:#111">Q</div>
<div class="t" style="left:539px;width:20px;text-align:center;top:171px;font-size:7px;font-weight:bold;color:#111">R</div>
<div class="t" style="left:571px;width:20px;text-align:center;top:171px;font-size:7px;font-weight:bold;color:#111">S</div>
<div class="t" style="left:603px;width:20px;text-align:center;top:171px;font-size:7px;font-weight:bold;color:#111">T</div>
<div class="t" style="left:635px;width:20px;text-align:center;top:171px;font-size:7px;font-weight:bold;color:#111">U</div>
<div class="t" style="left:667px;width:20px;text-align:center;top:171px;font-size:7px;font-weight:bold;color:#111">V</div>
<div class="t" style="left:699px;width:20px;text-align:center;top:171px;font-size:7px;font-weight:bold;color:#111">W</div>
<div class="t" style="left:731px;width:20px;text-align:center;top:171px;font-size:7px;font-weight:bold;color:#111">X</div>
<div class="t" style="left:763px;width:20px;text-align:center;top:171px;font-size:7px;font-weight:bold;color:#111">Y</div>
<div class="t" style="left:0;width:21px;text-align:center;top:182px;font-size:7px;font-weight:bold;color:#111">1</div>
<div class="t" style="left:0;width:21px;text-align:center;top:192px;font-size:7px;font-weight:bold;color:#111">2</div>
<div class="t" style="left:0;width:21px;text-align:center;top:202px;font-size:7px;font-weight:bold;color:#111">3</div>
<div class="t" style="left:0;width:21px;text-align:center;top:212px;font-size:7px;font-weight:bold;color:#111">4</div>
<div class="t" style="left:0;width:21px;text-align:center;top:222px;font-size:7px;font-weight:bold;color:#111">5</div>
<div class="t" style="left:0;width:21px;text-align:center;top:232px;font-size:7px;font-weight:bold;color:#111">6</div>
<div class="t" style="left:0;width:21px;text-align:center;top:242px;font-size:7px;font-weight:bold;color:#111">7</div>
<div class="t" style="left:0;width:21px;text-align:center;top:252px;font-size:7px;font-weight:bold;color:#111">8</div>
<div class="t" style="left:0;width:21px;text-align:center;top:262px;font-size:7px;font-weight:bold;color:#111">9</div>
<div class="t" style="left:0;width:21px;text-align:center;top:272px;font-size:7px;font-weight:bold;color:#111">10</div>
<div class="t" style="left:0;width:21px;text-align:center;top:282px;font-size:7px;font-weight:bold;color:#111">11</div>
<div class="t" style="left:0;width:21px;text-align:center;top:292px;font-size:7px;font-weight:bold;color:#111">12</div>
<div class="t" style="left:0;width:21px;text-align:center;top:302px;font-size:7px;font-weight:bold;color:#111">13</div>
<div class="t" style="left:0;width:21px;text-align:center;top:312px;font-size:7px;font-weight:bold;color:#111">14</div>
<div class="t" style="left:0;width:21px;text-align:center;top:322px;font-size:7px;font-weight:bold;color:#111">15</div>
<div class="t" style="left:0;width:21px;text-align:center;top:332px;font-size:7px;font-weight:bold;color:#111">16</div>
<div class="t" style="left:0;width:21px;text-align:center;top:342px;font-size:7px;font-weight:bold;color:#111">17</div>
<div class="t" style="left:0;width:21px;text-align:center;top:352px;font-size:7px;font-weight:bold;color:#111">18</div>
<div class="t" style="left:0;width:21px;text-align:center;top:362px;font-size:7px;font-weight:bold;color:#111">19</div>
<div class="t" style="left:0;width:21px;text-align:center;top:372px;font-size:7px;font-weight:bold;color:#111">20</div>
<div class="t" style="left:0;width:21px;text-align:center;top:382px;font-size:7px;font-weight:bold;color:#111">21</div>
<div class="t" style="left:0;width:21px;text-align:center;top:392px;font-size:7px;font-weight:bold;color:#111">22</div>
<div class="t" style="left:0;width:21px;text-align:center;top:402px;font-size:7px;font-weight:bold;color:#111">23</div>
<div class="t" style="left:0;width:21px;text-align:center;top:412px;font-size:7px;font-weight:bold;color:#111">24</div>
<div class="t" style="left:0;width:21px;text-align:center;top:422px;font-size:7px;font-weight:bold;color:#111">25</div>
<div class="t" style="left:0;width:21px;text-align:center;top:432px;font-size:7px;font-weight:bold;color:#111">26</div>
<div class="t" style="left:0;width:21px;text-align:center;top:442px;font-size:7px;font-weight:bold;color:#111">27</div>
<div class="t" style="left:0;width:21px;text-align:center;top:452px;font-size:7px;font-weight:bold;color:#111">28</div>
<div class="t" style="left:0;width:21px;text-align:center;top:462px;font-size:7px;font-weight:bold;color:#111">29</div>
<div class="t" style="left:0;width:21px;text-align:center;top:472px;font-size:7px;font-weight:bold;color:#111">30</div>
<div class="t" style="left:0;width:21px;text-align:center;top:482px;font-size:7px;font-weight:bold;color:#111">31</div>
<div class="t" style="left:0;width:21px;text-align:center;top:492px;font-size:7px;font-weight:bold;color:#111">32</div>
<div class="t" style="left:0;width:21px;text-align:center;top:502px;font-size:7px;font-weight:bold;color:#111">33</div>
<div class="t" style="left:0;width:21px;text-align:center;top:512px;font-size:7px;font-weight:bold;color:#111">34</div>
<div class="t" style="left:0;width:21px;text-align:center;top:522px;font-size:7px;font-weight:bold;color:#111">35</div>
<div class="t" style="left:0;width:21px;text-align:center;top:532px;font-size:7px;font-weight:bold;color:#111">36</div>
<div class="t" style="left:0;width:21px;text-align:center;top:542px;font-size:7px;font-weight:bold;color:#111">37</div>
<div class="t" style="left:0;width:21px;text-align:center;top:552px;font-size:7px;font-weight:bold;color:#111">38</div>
<div class="t" style="left:0;width:21px;text-align:center;top:562px;font-size:7px;font-weight:bold;color:#111">39</div>
<div class="t" style="left:0;width:21px;text-align:center;top:572px;font-size:7px;font-weight:bold;color:#111">40</div>
<div class="t" style="left:0;width:21px;text-align:center;top:582px;font-size:7px;font-weight:bold;color:#111">41</div>
<div class="t" style="left:0;width:21px;text-align:center;top:592px;font-size:7px;font-weight:bold;color:#111">42</div>
<div class="t" style="left:0;width:21px;text-align:center;top:602px;font-size:7px;font-weight:bold;color:#111">43</div>
<div class="t" style="left:0;width:21px;text-align:center;top:612px;font-size:7px;font-weight:bold;color:#111">44</div>
<div class="t" style="left:0;width:21px;text-align:center;top:622px;font-size:7px;font-weight:bold;color:#111">45</div>
<div class="t" style="left:116.5px;top:372px;font-size:30.5px;color:#8f8f97">Page 1</div>
<div class="t" style="left:649px;top:380px;font-size:18px;color:#a3a3a8">Page 3</div>
<div class="abs" style="left:151px;top:232px;width:2px;height:2px;background:#000"></div><div class="abs" style="left:154px;top:235px;width:1px;height:2px;background:#222"></div>
<div class="t" style="left:150px;top:240px;font-size:7px;font-weight:bold;letter-spacing:0.5px;color:#000">jkhfvlikl/MK;</div>
<div class="t" style="left:150px;top:470px;font-size:7px;font-weight:bold;letter-spacing:0.15px;color:#000">ljkhbqik;mjk';</div>
<div class="abs" style="left:262px;top:192px;width:249px;height:51px;border:1px solid #8e8e8e;border-radius:3px;background:linear-gradient(#fbfbfb,#f1f1f1);box-shadow:2px 2px 3px rgba(0,0,0,.35)"></div>
<div class="abs" style="left:264px;top:194px;width:61px;height:22px;border:1px solid #b9b9b9;background:#e6e6e6"></div>
<div class="abs" style="left:324px;top:194px;width:41px;height:22px;border:1px solid #b9b9b9;background:#e6e6e6"></div>
<div class="t" style="left:267px;top:199px;font-size:11px;color:#222">Calibri</div>
<div class="t" style="left:327px;top:199px;font-size:11px;color:#222">11</div>
<div class="abs" style="left:315px;top:203px;width:0;height:0;border-left:2.5px solid transparent;border-right:2.5px solid transparent;border-top:3px solid #777"></div>
<div class="abs" style="left:355px;top:203px;width:0;height:0;border-left:2.5px solid transparent;border-right:2.5px solid transparent;border-top:3px solid #777"></div>
<svg class="abs" style="left:0;top:0" width="804" height="630">
<defs><linearGradient id="brush" x1="0" y1="0" x2="1" y2="1"><stop offset="0" stop-color="#fff2a8"/><stop offset="1" stop-color="#c9a52a"/></linearGradient></defs>
<text x="369" y="211" font-family="Liberation Serif" font-size="17" font-weight="bold" fill="#222">A</text>
<path d="M381 200 L383.5 197 L386 200 Z" fill="#2a5aa8"/>
<text x="392" y="211" font-family="Liberation Serif" font-size="13" font-weight="bold" fill="#222">A</text>
<path d="M401 197 L403.5 200 L406 197 Z" fill="#2a5aa8"/>
<text x="414.5" y="210" font-family="Liberation Sans" font-size="14" font-weight="bold" fill="#222">$</text>
<path d="M434 204 L439 204 L436.5 207 Z" fill="#888"/>
<text x="447" y="210.5" font-family="Liberation Sans" font-size="14" fill="#222">%</text>
<circle cx="476" cy="203.5" r="1.6" fill="#222"/><path d="M477 203.5 Q477.5 207 474.5 208.5" fill="none" stroke="#222" stroke-width="1.4"/>
<path d="M489.5 204 L497 201 L501.5 205.5 L498.5 212 Z" fill="url(#brush)" stroke="#8a7020" stroke-width=".7"/>
<path d="M497.5 201.5 L503.5 196 Q506 195 506.5 197.5 L501 205" fill="#4b5a8c" stroke="#2e3760" stroke-width=".7"/>
<text x="269.5" y="234" font-family="Liberation Serif" font-size="13" font-weight="bold" fill="#111">B</text>
<text x="292" y="234" font-family="Liberation Serif" font-size="13" font-style="italic" font-weight="bold" fill="#111">I</text>
<path d="M312 225.5 H326 M314 228.5 H324 M312 231.5 H326 M314 234.5 H324" stroke="#111" stroke-width="1.3"/>
<rect x="335" y="224.0" width="1" height="1" fill="#222"/><rect x="335" y="226.6" width="1" height="1" fill="#222"/><rect x="335" y="229.2" width="1" height="1" fill="#222"/><rect x="335" y="231.8" width="1" height="1" fill="#222"/><rect x="335" y="234.4" width="1" height="1" fill="#222"/><rect x="338" y="224.0" width="1" height="1" fill="#222"/><rect x="338" y="229.2" width="1" height="1" fill="#222"/><rect x="338" y="234.4" width="1" height="1" fill="#222"/><rect x="341" y="224.0" width="1" height="1" fill="#222"/><rect x="341" y="226.6" width="1" height="1" fill="#222"/><rect x="341" y="229.2" width="1" height="1" fill="#222"/><rect x="341" y="231.8" width="1" height="1" fill="#222"/><rect x="341" y="234.4" width="1" height="1" fill="#222"/><rect x="344" y="224.0" width="1" height="1" fill="#222"/><rect x="344" y="229.2" width="1" height="1" fill="#222"/><rect x="344" y="234.4" width="1" height="1" fill="#222"/><rect x="347" y="224.0" width="1" height="1" fill="#222"/><rect x="347" y="226.6" width="1" height="1" fill="#222"/><rect x="347" y="229.2" width="1" height="1" fill="#222"/><rect x="347" y="231.8" width="1" height="1" fill="#222"/><rect x="347" y="234.4" width="1" height="1" fill="#222"/>
<path d="M334.5 236.5 H348.5" stroke="#111" stroke-width="1.4"/>
<path d="M355 229 L360 229 L357.5 232 Z" fill="#888"/>
<path d="M369.5 227.5 L375.5 221.5 L382 228 L376 234 Z" fill="#f6f8fc" stroke="#2d3a55" stroke-width="1"/>
<path d="M373 224 L376.5 220.5 Q378.5 219.5 379 222 L377 226" fill="none" stroke="#555" stroke-width="1"/>
<path d="M379 223 Q383.5 223.5 383.5 231" fill="none" stroke="#2f4a9a" stroke-width="1.8"/>
<rect x="367.5" y="234" width="16" height="4" fill="#f0f016"/>
<path d="M389 229 L394 229 L391.5 232 Z" fill="#888"/>
<text x="402" y="235" font-family="Liberation Serif" font-size="15" font-weight="bold" fill="#2a3a6a">A</text>
<rect x="401" y="235.5" width="16" height="3" fill="#cc1c1c"/>
<path d="M423 229 L428 229 L425.5 232 Z" fill="#888"/>
<text x="441" y="229" font-family="Liberation Sans" font-size="9" font-weight="bold" fill="#222">.0</text>
<text x="437" y="237" font-family="Liberation Sans" font-size="9" font-weight="bold" fill="#222">.00</text>
<path d="M435 224.5 H441 M437.5 222.5 L435 224.5 L437.5 226.5" fill="none" stroke="#2a5aa8" stroke-width="1.4"/>
<text x="460" y="229" font-family="Liberation Sans" font-size="9" font-weight="bold" fill="#222">.00</text>
<text x="464" y="237" font-family="Liberation Sans" font-size="9" font-weight="bold" fill="#222">.0</text>
<path d="M458 232.5 H464 M461.5 230.5 L464 232.5 L461.5 234.5" fill="none" stroke="#2a5aa8" stroke-width="1.4"/>
<rect x="479.5" y="222.5" width="16" height="15" fill="#e8eef8" stroke="#5a6f92"/>
<path d="M480 225.5 H495 M480 234.5 H495" stroke="#7d93b8" stroke-width="1.5"/>
<text x="484.5" y="233" font-family="Liberation Serif" font-size="9" font-weight="bold" fill="#111">a</text>
<path d="M481 230 H484 M491 230 H494" stroke="#333" stroke-width="1"/>
</svg>
<div class="abs" style="left:262px;top:258px;width:249px;height:319px;border:1px solid #878787;border-radius:2px;background:#fafafa;box-shadow:2px 2px 3px rgba(0,0,0,.35)"></div>
<div class="abs" style="left:263px;top:259px;width:25px;height:317px;background:#f0f1f2"></div>
<div class="abs" style="left:288px;top:259px;width:1px;height:317px;background:#d0d2d4"></div>
<div class="abs" style="left:289px;top:259px;width:1px;height:317px;background:#ffffff"></div>
<div class="abs" style="left:264px;top:489px;width:246px;height:21px;border:1px solid #e6c375;border-radius:2px;background:linear-gradient(#fff9dc 0%,#ffefb5 35%,#fdd876 55%,#fcd46a 80%,#fde9a6 100%)"></div>
<div class="t" style="left:297px;top:265.9px;font-size:11px;letter-spacing:0.2px;color:#3b3b3b">Cu<u>t</u></div>
<div class="t" style="left:297px;top:287.7px;font-size:11px;letter-spacing:0.2px;color:#3b3b3b"><u>C</u>opy</div>
<div class="t" style="left:297px;top:309.5px;font-size:11px;letter-spacing:0.2px;color:#3b3b3b"><u>P</u>aste</div>
<div class="t" style="left:297px;top:331.6px;font-size:11px;letter-spacing:0.2px;color:#3b3b3b">Paste <u>S</u>pecial...</div>
<div class="t" style="left:297px;top:355.9px;font-size:11px;letter-spacing:0.2px;color:#3b3b3b"><u>I</u>nsert...</div>
<div class="t" style="left:297px;top:377.7px;font-size:11px;letter-spacing:0.2px;color:#3b3b3b"><u>D</u>elete...</div>
<div class="t" style="left:297px;top:399.5px;font-size:11px;letter-spacing:0.2px;color:#3b3b3b">Clear Co<u>n</u>tents</div>
<div class="t" style="left:297px;top:423.3px;font-size:11px;letter-spacing:0.2px;color:#3b3b3b">Insert Co<u>m</u>ment</div>
<div class="t" style="left:297px;top:447.7px;font-size:11px;letter-spacing:0.2px;color:#3b3b3b"><u>F</u>ormat Cells...</div>
<div class="t" style="left:297px;top:471.2px;font-size:11px;letter-spacing:0.2px;color:#3b3b3b">Insert Page <u>B</u>reak</div>
<div class="t" style="left:297px;top:493.0px;font-size:11px;letter-spacing:0.2px;color:#3b3b3b">Reset <u>A</u>ll Page Breaks</div>
<div class="t" style="left:297px;top:515.5px;font-size:11px;letter-spacing:0.2px;color:#3b3b3b"><u>S</u>et Print Area</div>
<div class="t" style="left:297px;top:537.3px;font-size:11px;letter-spacing:0.2px;color:#3b3b3b"><u>R</u>eset Print Area</div>
<div class="t" style="left:297px;top:559.0px;font-size:11px;letter-spacing:0.2px;color:#3b3b3b">Page Set<u>u</u>p...</div>
<div class="abs" style="left:296px;top:347px;width:213px;height:1px;background:#c5c5c5"></div>
<div class="abs" style="left:296px;top:348px;width:213px;height:1px;background:#ffffff"></div>
<div class="abs" style="left:296px;top:416px;width:213px;height:1px;background:#c5c5c5"></div>
<div class="abs" style="left:296px;top:417px;width:213px;height:1px;background:#ffffff"></div>
<div class="abs" style="left:296px;top:440px;width:213px;height:1px;background:#c5c5c5"></div>
<div class="abs" style="left:296px;top:441px;width:213px;height:1px;background:#ffffff"></div>
<div class="abs" style="left:296px;top:464px;width:213px;height:1px;background:#c5c5c5"></div>
<div class="abs" style="left:296px;top:465px;width:213px;height:1px;background:#ffffff"></div>
<svg class="abs" style="left:0;top:0" width="804" height="630">
<defs><linearGradient id="fold" x1="0" y1="0" x2="1" y2="1"><stop offset="0" stop-color="#fff6b0"/><stop offset="1" stop-color="#c8a12a"/></linearGradient>
<linearGradient id="clip" x1="0" y1="0" x2="0" y2="1"><stop offset="0" stop-color="#f6e39a"/><stop offset="1" stop-color="#c59a2c"/></linearGradient></defs>
<path d="M272 264 L278.5 273 M279 264 L272.5 273" stroke="#56606e" stroke-width="1.3"/>
<circle cx="272" cy="275.5" r="2.3" fill="none" stroke="#2f5db4" stroke-width="1.6"/>
<circle cx="279" cy="275.5" r="2.3" fill="none" stroke="#2f5db4" stroke-width="1.6"/>
<rect x="268.5" y="286.5" width="9" height="10" fill="#fff" stroke="#6d87ad"/>
<path d="M270 289.5 H276 M270 291.5 H276 M270 293.5 H276" stroke="#7ea0d0"/>
<rect x="274.5" y="290.5" width="9" height="10" fill="#eaf1fb" stroke="#4e6fa3"/>
<path d="M276 293.5 H282 M276 295.5 H282 M276 297.5 H282" stroke="#6f93c8"/>
<rect x="268.5" y="309.5" width="11" height="13" rx="1" fill="url(#clip)" stroke="#8d6b1c"/>
<rect x="271.5" y="307.5" width="5" height="3" fill="#eee" stroke="#777"/>
<rect x="275.5" y="315.5" width="9" height="8" fill="#f4f6fa" stroke="#6d7788"/>
<path d="M277 318.5 H283 M277 320.5 H283" stroke="#9aa3b2"/>
<rect x="269" y="423" width="14.5" height="12.5" rx="1.5" fill="url(#fold)" stroke="#7a6318" stroke-width="1"/>
<path d="M280.5 435 L283.5 432" stroke="#fff" stroke-width="1"/>
<path d="M269 423.5 L273 422 M270.5 421.5 V425" stroke="#fff4a0" stroke-width="1"/>
<rect x="268.5" y="451.5" width="11" height="8.5" fill="#eef4fa" stroke="#526480"/>
<path d="M270.5 455 H272 M273.5 455 H278 M270.5 457.5 H272 M273.5 457.5 H278" stroke="#7f9bbf"/>
<path d="M270 452 L275.5 446.5 L282 452" fill="none" stroke="#6b6b6b" stroke-width="1.3" stroke-dasharray="1.2,.8"/>
<path d="M276 446.5 L283.5 446 L283.5 452.5 Z" fill="#e9bf52"/>
</svg>
<svg class="abs" style="left:0;top:0" width="804" height="630">
<g fill="none" stroke="#e30b0b" stroke-width="3.6" stroke-linecap="round" stroke-linejoin="round">
<path d="M258 488 L252 485 L237 484 C233 485, 229.5 487, 228 490 C227.5 494, 228.5 498, 231 501 L237.5 505 L244 508.5 L254 509.8 L300 510.5 L359 510 L370 513 L380 517 L433 518.3 L469 518.3 L476 516.5 L480 513 L483 509.5 L488 507.5 L505 507.3 L518 505.6 L525 503 L528.8 499 L528.5 494.5 L523 490 L517 487.5 L458 487.3 L452 486.2 L370 485.6 L300 485 L237 484"/>
<path d="M557.5 491 L559 487.5 L563 485.5 L570.3 485 L576 486 L581 489 L586.5 494 L587.6 499 L586.5 504 L583 508 L575 513.5 L567 518 L559 523 L551 528 L545.5 530.8"/>
<path d="M638.2 461.2 L633 464 L627 467.5 L621 475 L615 481 L610 486 L606 492 L604 498 L604.5 503.5 L607 508 L612 511.5 L618 512.8 L624 511.5 L629 508.5 L632.5 503 L633 497.5"/>
</g>
<path d="M621.5 467 L632 462.5 L634.5 468 L625 472 Z" fill="#e30b0b"/>
</svg>
</body></html>
